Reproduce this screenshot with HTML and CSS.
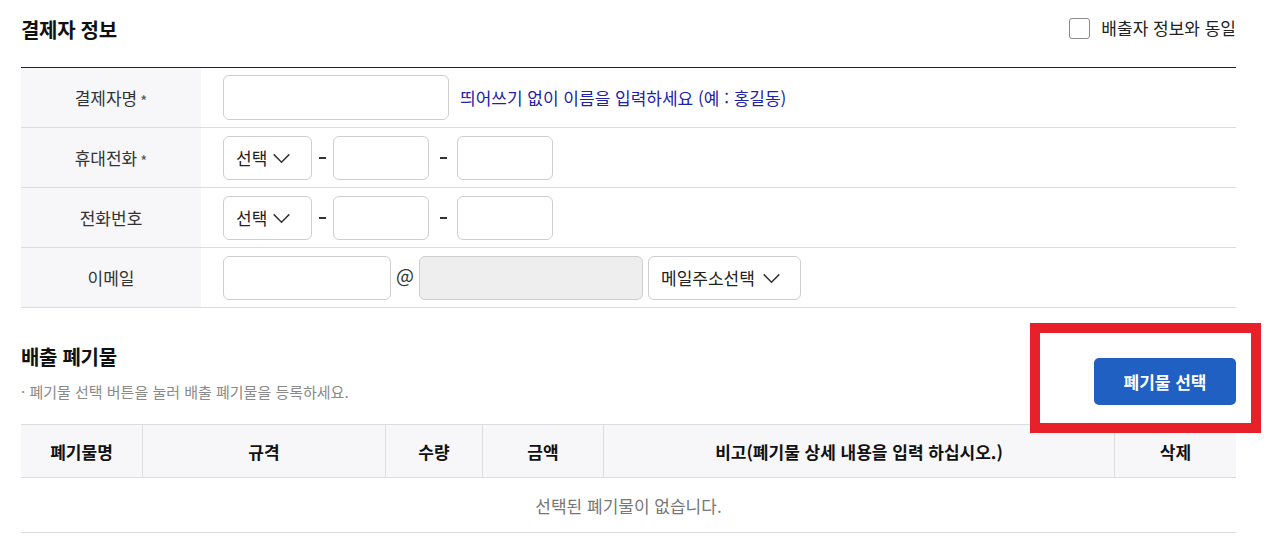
FILE: index.html
```html
<!DOCTYPE html>
<html lang="ko">
<head>
<meta charset="utf-8">
<title>결제자 정보</title>
<link rel="stylesheet" href="styles.css">
</head>
<body>
<div class="page">
  <div class="sec-head">
    <h2 class="sec-title">결제자 정보</h2>
    <label class="same-check"><span class="box"></span><span>배출자 정보와 동일</span></label>
  </div>

  <div class="form">
    <div class="row">
      <div class="th">결제자명<span class="req">*</span></div>
      <div class="td">
        <span class="input w-name"></span>
        <span class="hint">띄어쓰기 없이 이름을 입력하세요 (예 : 홍길동)</span>
      </div>
    </div>
    <div class="row">
      <div class="th">휴대전화<span class="req">*</span></div>
      <div class="td">
        <span class="select w-sel">선택<svg class="chev" viewBox="0 0 20 12"><path d="M1.5 1.5 L10 10 L18.5 1.5" /></svg></span>
        <span class="dash d1"><i></i></span>
        <span class="input w-num"></span>
        <span class="dash d2"><i></i></span>
        <span class="input w-num"></span>
      </div>
    </div>
    <div class="row">
      <div class="th">전화번호</div>
      <div class="td">
        <span class="select w-sel">선택<svg class="chev" viewBox="0 0 20 12"><path d="M1.5 1.5 L10 10 L18.5 1.5" /></svg></span>
        <span class="dash d1"><i></i></span>
        <span class="input w-num"></span>
        <span class="dash d2"><i></i></span>
        <span class="input w-num"></span>
      </div>
    </div>
    <div class="row">
      <div class="th">이메일</div>
      <div class="td">
        <span class="input w-mail"></span>
        <span class="at">@</span>
        <span class="input w-domain disabled"></span>
        <span class="select w-mailsel">메일주소선택<svg class="chev" viewBox="0 0 20 12"><path d="M1.5 1.5 L10 10 L18.5 1.5" /></svg></span>
      </div>
    </div>
  </div>

  <div class="sec2-head">
    <div class="sec2-left">
      <h2 class="sec-title">배출 폐기물</h2>
      <p class="sub">· 폐기물 선택 버튼을 눌러 배출 폐기물을 등록하세요.</p>
    </div>
    <button class="btn-primary">폐기물 선택</button>
  </div>

  <div class="grid">
    <div class="gh c1">폐기물명</div>
    <div class="gh c2">규격</div>
    <div class="gh c3">수량</div>
    <div class="gh c4">금액</div>
    <div class="gh c5">비고(폐기물 상세 내용을 입력 하십시오.)</div>
    <div class="gh c6">삭제</div>
    <div class="empty">선택된 폐기물이 없습니다.</div>
  </div>

  <div class="highlight"></div>
</div>
</body>
</html>
```

FILE: styles.css
```css
* { box-sizing: border-box; }
html, body { margin: 0; padding: 0; background: #fff; }
body {
  font-family: "Noto Sans CJK KR", "Noto Sans", sans-serif;
  color: #222;
  font-size: 17px;
}
.page {
  position: relative;
  width: 1267px;
  height: 556px;
  padding-left: 21px;
  overflow: hidden;
}
.sec-head {
  width: 1215px;
  height: 60px;
  display: flex;
  align-items: center;
  justify-content: space-between;
  margin-bottom: 7px;
}
.sec-title {
  margin: 0;
  font-size: 20px;
  font-weight: 700;
  line-height: 28px;
  color: #111;
  letter-spacing: -0.3px;
}
.same-check {
  display: flex;
  align-items: center;
  gap: 11px;
  font-size: 17px;
  color: #222;
  line-height: 22px;
  margin-top: -4px;
}
.same-check .box {
  width: 21px;
  height: 21px;
  border: 1.5px solid #8a8a8a;
  border-radius: 3px;
  background: #fff;
}
.form {
  width: 1215px;
  border-top: 1px solid #222;
}
.row {
  display: flex;
  height: 60px;
  border-bottom: 1px solid #dcdcdc;
}
.th {
  width: 180px;
  background: #f7f7fa;
  display: flex;
  align-items: center;
  justify-content: center;
  font-size: 17px;
  color: #333;
  line-height: 22px;
}
.req {
  font-size: 15px;
  color: #555;
  margin-left: 3px;
  position: relative;
  top: 3px;
}
.td {
  flex: 1;
  display: flex;
  align-items: center;
  padding-left: 22px;
}
.input, .select {
  height: 44px;
  border: 1px solid #cfcfcf;
  border-radius: 6px;
  background: #fff;
  display: inline-flex;
  align-items: center;
}
.w-name { width: 226px; height: 45px; }
.hint {
  margin-left: 11px;
  color: #2222a8;
  font-size: 17px;
  line-height: 22px;
}
.select {
  padding-left: 12px;
  font-size: 17px;
  color: #222;
  line-height: 22px;
}
.w-sel { width: 89px; }
.w-mailsel { width: 153px; margin-left: 5px; }
.chev {
  width: 19px;
  height: 11px;
  margin-left: 5px;
  margin-top: 2px;
  fill: none;
  stroke: #333;
  stroke-width: 1.6;
}
.w-mailsel .chev { margin-left: 7px; }
.dash {
  display: inline-flex;
  justify-content: center;
  align-items: center;
}
.dash i {
  display: block;
  width: 7px;
  height: 1.5px;
  background: #333;
  margin-top: 1px;
}
.d1 { width: 21px; }
.d2 { width: 28px; }
.w-num { width: 96px; }
.w-mail { width: 168px; }
.at {
  width: 28px;
  text-align: center;
  font-size: 19px;
  color: #333;
  line-height: 22px;
  margin-top: -6px;
}
.w-domain { width: 224px; }
.disabled { background: #eeeeee; }

.sec2-head {
  width: 1215px;
  display: flex;
  justify-content: space-between;
  align-items: flex-start;
  margin-top: 35px;
  height: 62px;
}
.sub {
  margin: 11px 0 0;
  font-size: 15px;
  line-height: 20px;
  color: #8a8a8a;
}
.btn-primary {
  margin-top: 15px;
  width: 142px;
  height: 47px;
  border: 0;
  border-radius: 5px;
  background: #2060c2;
  color: #fff;
  font-family: inherit;
  font-size: 17px;
  font-weight: 700;
  line-height: 22px;
}
.grid {
  width: 1215px;
  margin-top: 19px;
  display: grid;
  grid-template-columns: 121px 243px 97px 121px 511px 122px;
  border-top: 1px solid #dcdcdc;
}
.gh {
  height: 53px;
  background: #f7f7fa;
  display: flex;
  align-items: center;
  justify-content: center;
  font-weight: 700;
  font-size: 17px;
  color: #111;
  border-bottom: 1px solid #dcdcdc;
  border-left: 1px solid #dcdcdc;
}
.gh.c1 { border-left: 0; }
.empty {
  grid-column: 1 / -1;
  height: 55px;
  display: flex;
  align-items: center;
  justify-content: center;
  color: #777;
  font-size: 17px;
  border-bottom: 1px solid #dcdcdc;
}
.highlight {
  position: absolute;
  left: 1030px;
  top: 323px;
  width: 231px;
  height: 110px;
  border: 10px solid #e8202a;
  pointer-events: none;
}
```
